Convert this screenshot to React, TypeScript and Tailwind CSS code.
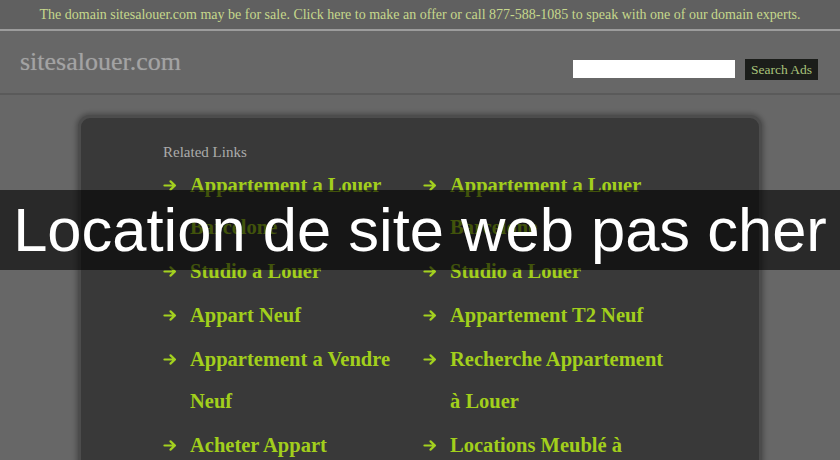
import React from 'react'

const serif = { fontFamily: '"Liberation Serif", "Times New Roman", serif' }

const leftLinks = [
  'Appartement a Louer Barcelone',
  'Studio a Louer',
  'Appart Neuf',
  'Appartement a Vendre Neuf',
  'Acheter Appart',
]

const rightLinks = [
  'Appartement a Louer Barcelone',
  'Studio a Louer',
  'Appartement T2 Neuf',
  'Recherche Appartement à Louer',
  'Locations Meublé à Paris',
]

function Arrow() {
  return (
    <svg viewBox="0 0 16 14" className="mt-[15px] h-[13px] w-[15px] shrink-0" aria-hidden>
      <path
        d="M1.5 7h11M8 2.5 12.8 7 8 11.5"
        fill="none"
        stroke="#a3d11f"
        strokeWidth="2.4"
        strokeLinecap="round"
        strokeLinejoin="round"
      />
    </svg>
  )
}

function LinkList({ items }: { items: string[] }) {
  return (
    <ul className="flex w-[260px] flex-col gap-[2px]">
      {items.map((t) => (
        <li key={t} className="flex gap-[12px]">
          <Arrow />
          <a className="w-[220px] text-[20.5px] font-bold leading-[42px] text-[#a2cf1c]">{t}</a>
        </li>
      ))}
    </ul>
  )
}

export default function App() {
  return (
    <div className="relative h-[460px] w-[840px] overflow-hidden bg-[#676767]" style={serif}>
      <div className="flex h-[29px] items-center justify-center bg-[#606060] text-[14px] text-[#c6d88c]">
        The domain sitesalouer.com may be for sale. Click here to make an offer or call 877-588-1085 to speak with one of our domain experts.
      </div>
      <div className="h-[2px] bg-[#9c9c9c]" />
      <header className="flex h-[64px] items-center justify-between border-b-2 border-[#5a5a5a] bg-[#676767] pl-[20px] pr-[22px]">
        <div className="-mt-[1px] text-[26px] text-[#a3a3a3] [text-shadow:0_0_1px_#888]">sitesalouer.com</div>
        <div className="mt-[14px] flex items-center gap-[10px]">
          <input className="h-[18px] w-[162px] bg-white outline-none" />
          <button className="h-[21px] w-[73px] bg-[#1b1d1a] text-[13.5px] leading-[21px] text-[#a9c47a]">Search Ads</button>
        </div>
      </header>
      <main className="px-[78px] pt-[20px]">
        <div className="rounded-[12px] border-[3px] border-[#4c4c4c] bg-[#393939] pb-[40px] pl-[82px] pt-[24px] shadow-[0_0_4px_2px_rgba(0,0,0,0.25)]">
          <div className="text-[15px] leading-[20px] text-[#ababab]">Related Links</div>
          <div className="mt-[2px] flex">
            <LinkList items={leftLinks} />
            <LinkList items={rightLinks} />
          </div>
        </div>
      </main>
      <div
        className="absolute left-0 top-[190px] flex h-[80px] w-full items-center justify-center bg-black/60 text-[61.5px] text-white"
        style={{ fontFamily: '"Liberation Sans", Arial, sans-serif' }}
      >
        Location de site web pas cher
      </div>
    </div>
  )
}
